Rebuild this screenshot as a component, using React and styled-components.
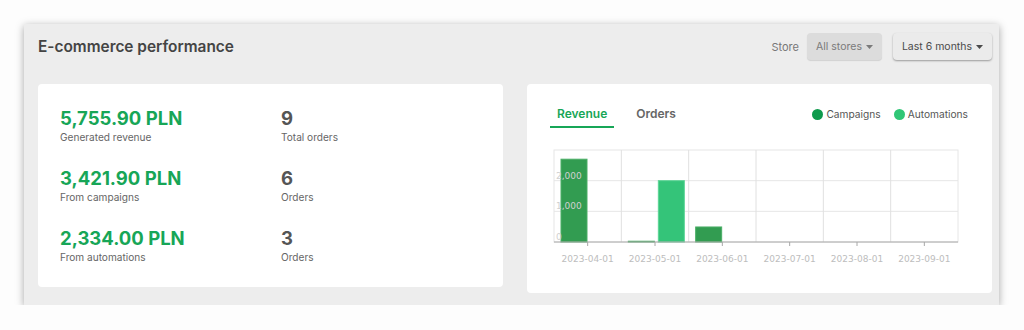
import React, { useState } from "react";
import styled, { createGlobalStyle } from "styled-components";

const GlobalStyle = createGlobalStyle`
  body {
    margin: 0;
    background: #fdfdfd;
    font-family: Inter, "Noto Sans", sans-serif;
  }
`;

const stats = [
  { value: "5,755.90 PLN", label: "Generated revenue", count: "9", countLabel: "Total orders" },
  { value: "3,421.90 PLN", label: "From campaigns", count: "6", countLabel: "Orders" },
  { value: "2,334.00 PLN", label: "From automations", count: "3", countLabel: "Orders" },
];

const months = ["2023-04-01", "2023-05-01", "2023-06-01", "2023-07-01", "2023-08-01", "2023-09-01"];
// revenue per month, y axis tops out at 3000
const series = [
  { campaigns: 2700, automations: 0 },
  { campaigns: 25, automations: 2000 },
  { campaigns: 490, automations: 0 },
  { campaigns: 0, automations: 0 },
  { campaigns: 0, automations: 0 },
  { campaigns: 0, automations: 0 },
];

const Caret = () => (
  <svg width="7" height="4" viewBox="0 0 7 4">
    <path d="M0 0h7L3.5 4z" fill="currentColor" />
  </svg>
);

const Chart = () => {
  const left = 4;
  const right = 408;
  const top = 5;
  const bottom = 97;
  const colW = (right - left) / 6;
  const y = (v) => bottom - (v / 3000) * (bottom - top);
  return (
    <ChartSvg width="430" height="125" viewBox="0 0 430 125">
      <rect x={left} y={top} width={right - left} height={bottom - top} fill="none" stroke="#e6e6e6" />
      {[1000, 2000].map((v) => (
        <line key={v} x1={left} x2={right} y1={y(v)} y2={y(v)} stroke="#e6e6e6" />
      ))}
      {months.map((m, i) =>
        i > 0 ? (
          <line key={m} x1={left + i * colW} x2={left + i * colW} y1={top} y2={bottom} stroke="#e0e0e0" />
        ) : null
      )}
      {series.map((s, i) => {
        const x = left + i * colW;
        return (
          <g key={i}>
            {s.campaigns > 0 && (
              <rect
                x={x + 7}
                y={y(s.campaigns)}
                width="26"
                height={bottom - y(s.campaigns)}
                fill="#329c51"
                stroke="#4aae66"
              />
            )}
            {s.automations > 0 && (
              <rect
                x={x + 37}
                y={y(s.automations)}
                width="26"
                height={bottom - y(s.automations)}
                fill="#34c479"
                stroke="#5dd596"
              />
            )}
          </g>
        );
      })}
      <line x1={left} x2={right} y1={bottom} y2={bottom} stroke="#a8a8a8" />
      {months.map((m, i) => {
        const cx = left + i * colW + colW / 2;
        return (
          <g key={m}>
            <line x1={cx} x2={cx} y1={bottom} y2={bottom + 4} stroke="#a8a8a8" />
            <AxisText x={cx} y="117" textAnchor="middle">
              {m}
            </AxisText>
          </g>
        );
      })}
      {[
        [2000, "2,000"],
        [1000, "1,000"],
        [0, "0"],
      ].map(([v, t]) => (
        <AxisText key={t} x="6" y={y(v) - 2} fill="#d0d0d0">
          {t}
        </AxisText>
      ))}
    </ChartSvg>
  );
};

export default function App() {
  const [tab, setTab] = useState("revenue");
  return (
    <>
      <GlobalStyle />
      <Panel>
        <Header>
          <Title>E-commerce performance</Title>
          <Filters>
            <FilterLabel>Store</FilterLabel>
            <Dropdown $muted $width={75}>
              All stores <Caret />
            </Dropdown>
            <Dropdown $width={99}>
              Last 6 months <Caret />
            </Dropdown>
          </Filters>
        </Header>
        <Cards>
          <StatsCard>
            {stats.map((s) => (
              <StatRow key={s.label}>
                <Stat>
                  <Money>{s.value}</Money>
                  <StatLabel>{s.label}</StatLabel>
                </Stat>
                <Stat>
                  <Count>{s.count}</Count>
                  <StatLabel>{s.countLabel}</StatLabel>
                </Stat>
              </StatRow>
            ))}
          </StatsCard>
          <ChartCard>
            <ChartTop>
              <Tabs>
                <Tab $active={tab === "revenue"} onClick={() => setTab("revenue")}>
                  Revenue
                </Tab>
                <Tab $active={tab === "orders"} onClick={() => setTab("orders")}>
                  Orders
                </Tab>
              </Tabs>
              <Legend>
                <LegendItem>
                  <Dot $color="#0e9a4c" />
                  Campaigns
                </LegendItem>
                <LegendItem>
                  <Dot $color="#30c676" />
                  Automations
                </LegendItem>
              </Legend>
            </ChartTop>
            <Chart />
          </ChartCard>
        </Cards>
      </Panel>
    </>
  );
}

const Panel = styled.div`
  margin: 24px 0 0 24px;
  width: 975px;
  height: 281px;
  box-sizing: border-box;
  background: #ededed;
  padding: 9px 7px 0 14px;
  box-shadow: 0 2px 8px rgba(0, 0, 0, 0.35);
`;

const Header = styled.div`
  display: flex;
  align-items: center;
  justify-content: space-between;
  height: 27px;
`;

const Title = styled.h2`
  margin: 0;
  font-size: 15.4px;
  font-weight: 600;
  color: #444;
`;

const Filters = styled.div`
  display: flex;
  align-items: center;
`;

const FilterLabel = styled.span`
  font-size: 11px;
  color: #777;
  margin-right: 8px;
`;

const Dropdown = styled.button`
  display: flex;
  align-items: center;
  justify-content: center;
  gap: 4px;
  width: ${(p) => p.$width}px;
  height: 27px;
  padding: 0;
  border: none;
  border-radius: 4px;
  font-family: inherit;
  font-size: 10.5px;
  color: ${(p) => (p.$muted ? "#7a7a7a" : "#4a4a4a")};
  background: ${(p) => (p.$muted ? "#dcdcdc" : "#ebebeb")};
  box-shadow: ${(p) => (p.$muted ? "0 1px 1px rgba(0,0,0,0.12)" : "0 1px 2px rgba(0,0,0,0.35)")};
  & + & {
    margin-left: 11px;
  }
`;

const Cards = styled.div`
  display: grid;
  grid-template-columns: 465px 465px;
  gap: 24px;
  align-items: start;
  margin-top: 24px;
`;

const Card = styled.div`
  background: #fff;
  border-radius: 4px;
  box-sizing: border-box;
`;

const StatsCard = styled(Card)`
  height: 203px;
  padding: 23px 22px;
  display: flex;
  flex-direction: column;
  gap: 23px;
`;

const StatRow = styled.div`
  display: grid;
  grid-template-columns: 221px 1fr;
`;

const Stat = styled.div`
  display: flex;
  flex-direction: column;
`;

const Money = styled.div`
  font-size: 18.5px;
  line-height: 23px;
  font-weight: 700;
  color: #17a657;
`;

const Count = styled(Money)`
  color: #555;
`;

const StatLabel = styled.div`
  font-size: 10.1px;
  line-height: 14px;
  color: #666;
`;

const ChartCard = styled(Card)`
  height: 209px;
  padding: 22px 24px 0 23px;
`;

const ChartTop = styled.div`
  display: flex;
  justify-content: space-between;
  align-items: flex-start;
`;

const Tabs = styled.div`
  display: flex;
  gap: 15px;
`;

const Tab = styled.div`
  padding: 0 7px 4px;
  font-size: 12px;
  line-height: 16px;
  font-weight: 600;
  cursor: pointer;
  color: ${(p) => (p.$active ? "#17a657" : "#666")};
  border-bottom: 2px solid ${(p) => (p.$active ? "#17a657" : "transparent")};
`;

const Legend = styled.div`
  display: flex;
  gap: 13px;
  padding-top: 1px;
`;

const LegendItem = styled.div`
  display: flex;
  align-items: center;
  gap: 3px;
  font-size: 10.2px;
  line-height: 14px;
  color: #555;
`;

const Dot = styled.span`
  width: 11px;
  height: 11px;
  border-radius: 50%;
  background: ${(p) => p.$color};
`;

const ChartSvg = styled.svg`
  display: block;
  margin-top: 17px;
`;

const AxisText = styled.text`
  font-family: "DejaVu Sans", sans-serif;
  font-size: 9px;
  fill: ${(p) => p.fill || "#bdbdbd"};
`;
